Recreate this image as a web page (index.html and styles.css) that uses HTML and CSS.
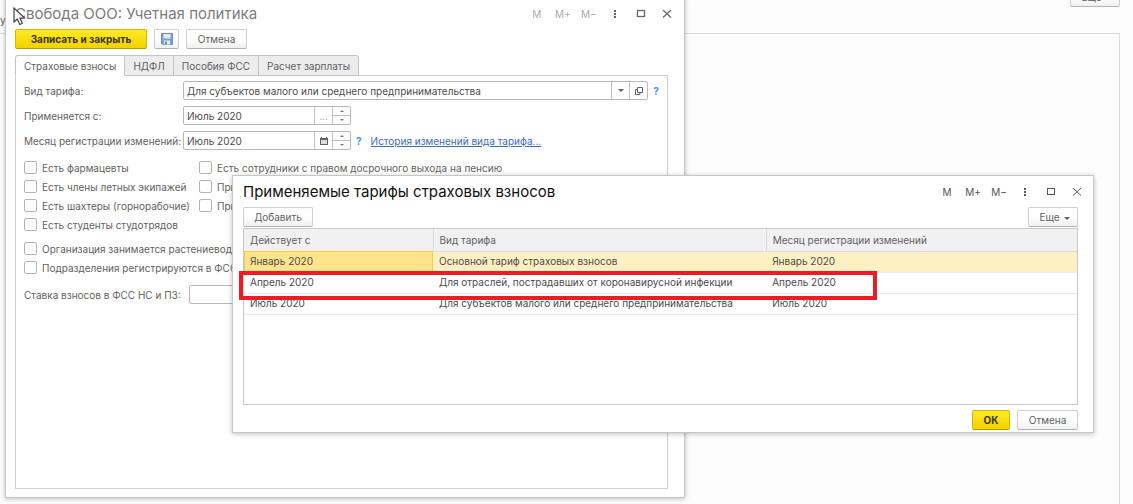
FILE: index.html
```html
<!DOCTYPE html>
<html lang="ru">
<head>
<meta charset="utf-8">
<title>Учетная политика</title>
<link rel="stylesheet" href="styles.css">
</head>
<body>
<div class="desktop">
  <div class="backdrop">
    <span class="backdrop-text">у</span>
    <button class="btn more backdrop-more" type="button">Еще <i class="caret"></i></button>
    <div class="backdrop-panel"></div>
  </div>

  <section class="window policy">
    <header class="titlebar">
      <h1 class="title">Свобода ООО: Учетная политика</h1>
      <div class="tools">
        <button type="button">M</button><button type="button">M+</button><button type="button">M−</button>
        <button type="button" aria-label="Меню"><svg width="12" height="12" viewBox="0 0 12 12"><path d="M5 2h2v2H5zM5 5h2v2H5zM5 8h2v2H5z" fill="currentColor"/></svg></button>
        <button type="button" aria-label="Развернуть"><svg width="12" height="12" viewBox="0 0 12 12"><rect x="2.500" y="2.500" width="7" height="6" fill="none" stroke="currentColor" stroke-width="1.300"/></svg></button>
        <button type="button" aria-label="Закрыть"><svg width="12" height="12" viewBox="0 0 12 12"><path d="M2 2l8 7.500M10 2L2 9.500" fill="none" stroke="currentColor" stroke-width="1.200"/></svg></button>
      </div>
    </header>
    <div class="commands">
      <button class="btn primary save" type="button">Записать и закрыть</button>
      <button class="btn disk" type="button" aria-label="Записать"><svg width="12" height="12" viewBox="0 0 12 12"><path d="M.5.500h11v11H1.500l-1-1z" fill="#7fa3cc" stroke="#6a8fb8"/><rect x="2.500" y="1" width="7" height="4.500" fill="#e0ebf6"/><rect x="3" y="7.500" width="6" height="4" fill="#e4ecf4"/><rect x="4" y="8.500" width="2" height="3" fill="#6a8fb8"/></svg></button>
      <button class="btn cancel" type="button">Отмена</button>
    </div>
    <nav class="tabs">
      <button class="tab active" type="button">Страховые взносы</button>
      <button class="tab" type="button">НДФЛ</button>
      <button class="tab" type="button">Пособия ФСС</button>
      <button class="tab" type="button">Расчет зарплаты</button>
    </nav>
    <form class="panel">
      <div class="fields">
        <label for="kind">Вид тарифа:</label>
        <div class="line">
          <div class="field wide">
            <input id="kind" type="text" value="Для субъектов малого или среднего предпринимательства">
            <button type="button" aria-label="Выбрать"><i class="caret"></i></button>
            <button type="button" aria-label="Открыть"><svg width="10" height="10" viewBox="0 0 10 10" fill="none" stroke="currentColor"><path d="M3.500 6.500v-5h5v5z"/><path d="M3.500 3.500h-2v5h4.500v-2"/></svg></button>
          </div>
          <a class="help" href="#">?</a>
        </div>
        <label for="from">Применяется с:</label>
        <div class="line">
          <div class="field">
            <input id="from" type="text" value="Июль 2020">
            <button type="button" class="dots">...</button>
            <div class="spin"><button type="button" aria-label="Больше"><i class="up"></i></button><button type="button" aria-label="Меньше"><i class="down"></i></button></div>
          </div>
        </div>
        <label for="month">Месяц регистрации изменений:</label>
        <div class="line">
          <div class="field">
            <input id="month" type="text" value="Июль 2020">
            <button type="button" aria-label="Календарь"><svg width="8" height="8" viewBox="0 0 8 8"><rect x=".5" y="1.500" width="7" height="6" fill="#ddd" stroke="currentColor"/><path d="M0 1h8v2H0zM1 0h1v1H1zM6 0h1v1H6z" fill="currentColor"/></svg></button>
            <div class="spin"><button type="button" aria-label="Больше"><i class="up"></i></button><button type="button" aria-label="Меньше"><i class="down"></i></button></div>
          </div>
          <a class="help" href="#">?</a>
          <a class="history" href="#">История изменений вида тарифа...</a>
        </div>
      </div>
      <div class="checks">
        <label><input type="checkbox">Есть фармацевты</label>
        <label><input type="checkbox">Есть сотрудники с правом досрочного выхода на пенсию</label>
        <label><input type="checkbox">Есть члены летных экипажей</label>
        <label><input type="checkbox">При</label>
        <label><input type="checkbox">Есть шахтеры (горнорабочие)</label>
        <label><input type="checkbox">При</label>
        <label><input type="checkbox">Есть студенты студотрядов</label>
      </div>
      <div class="checks single">
        <label><input type="checkbox">Организация занимается растениевод</label>
        <label><input type="checkbox">Подразделения регистрируются в ФСС</label>
      </div>
      <div class="line rate">
        <label for="rate">Ставка взносов в ФСС НС и ПЗ:</label>
        <div class="field"><input id="rate" type="text"></div>
      </div>
    </form>
  </section>

  <section class="window tariffs">
    <header class="titlebar">
      <h2 class="title">Применяемые тарифы страховых взносов</h2>
      <div class="tools">
        <button type="button">M</button><button type="button">M+</button><button type="button">M−</button>
        <button type="button" aria-label="Меню"><svg width="12" height="12" viewBox="0 0 12 12"><path d="M5 2h2v2H5zM5 5h2v2H5zM5 8h2v2H5z" fill="currentColor"/></svg></button>
        <button type="button" aria-label="Развернуть"><svg width="12" height="12" viewBox="0 0 12 12"><rect x="2.500" y="2.500" width="7" height="6" fill="none" stroke="currentColor"/></svg></button>
        <button type="button" aria-label="Закрыть"><svg width="12" height="12" viewBox="0 0 12 12"><path d="M2 2l8 7.500M10 2L2 9.500" fill="none" stroke="currentColor"/></svg></button>
      </div>
    </header>
    <div class="commands between">
      <button class="btn add" type="button">Добавить</button>
      <button class="btn more" type="button">Еще <i class="caret"></i></button>
    </div>
    <div class="grid">
      <table>
        <colgroup><col class="c1"><col class="c2"><col></colgroup>
        <thead><tr><th>Действует с</th><th>Вид тарифа</th><th>Месяц регистрации изменений</th></tr></thead>
        <tbody>
          <tr class="selected"><td>Январь 2020</td><td>Основной тариф страховых взносов</td><td>Январь 2020</td></tr>
          <tr><td>Апрель 2020</td><td>Для отраслей, пострадавших от коронавирусной инфекции</td><td>Апрель 2020</td></tr>
          <tr><td>Июль 2020</td><td>Для субъектов малого или среднего предпринимательства</td><td>Июль 2020</td></tr>
        </tbody>
      </table>
      <div class="highlight"></div>
    </div>
    <footer class="footer">
      <button class="btn primary ok" type="button">ОК</button>
      <button class="btn cancel" type="button">Отмена</button>
    </footer>
  </section>

  <svg class="cursor" width="13" height="19" viewBox="0 0 13 19"><path d="M1 1v14l3.300-3 2.500 5.500 2.500-1.200L7 11h4.500z" fill="#fff" stroke="#444" stroke-width="1.200"/></svg>
</div>
</body>
</html>
```

FILE: styles.css
```css
* { box-sizing: border-box; }
body {
  margin: 0;
  background: #fdfdfd;
  color: #626262;
  font: 10px/12px Inter, "Liberation Sans", Arial, sans-serif;
}
button, input { font: inherit; color: inherit; }
button { padding: 0; border: 0; background: none; }
.desktop { position: relative; min-height: 100vh; overflow: hidden; }

.backdrop { display: flex; flex-direction: column; min-height: 100vh; padding-right: 13px; }
.backdrop-text { position: absolute; left: 0; top: 14px; }
.backdrop-more { align-self: flex-end; margin-top: -13px; }
.backdrop-panel { flex: 1; margin-top: 26px; border: 1px solid #dcdcdc; border-width: 1px 1px 0 0; }

.window {
  position: absolute;
  padding: 0 15px 0 10px;
  background: #fff;
  border: 1px solid #c6c6c6;
  box-shadow: 0 1px 5px rgba(0, 0, 0, 0.25);
}
.policy { left: 5px; top: -3px; width: 60%; padding: 0 16px 8px 9px; }
.tariffs { left: 232px; right: 39px; top: 175px; padding-bottom: 2px; }

.titlebar { display: flex; justify-content: space-between; align-items: center; height: 31px; margin-right: -12px; }
.title { margin: 0; font-size: 15px; line-height: 18px; font-weight: normal; color: #111; }
.policy .title { color: #7c7c7c; }
.tools { display: flex; color: #555; }
.tools button { display: flex; justify-content: center; align-items: center; width: 26px; height: 16px; }
.policy .tools { color: #666; }
.policy .tools button:nth-child(-n+3) { color: #aaa; }

.commands { display: flex; gap: 7px; }
.between { justify-content: space-between; }
.btn {
  height: 20px;
  padding: 0;
  border: 1px solid #cfcfcf;
  border-bottom-color: #b4b4b4;
  border-radius: 2px;
  background: linear-gradient(#fff 50%, #f0f0f0);
  white-space: nowrap;
}
.primary { border-color: #d3b800 #d3b800 #b89f00; background: linear-gradient(#ffe925, #f3d200); color: #3c3500; font-weight: bold; }
.save { width: 132px; }
.disk { display: flex; justify-content: center; align-items: center; width: 25px; }
.cancel { width: 61px; }
.add { width: 70px; }
.ok { width: 38px; }
.more { width: 50px; padding-left: 4px; }
.caret { display: inline-block; margin-left: 2px; border: 3px solid transparent; border-top-color: currentColor; border-bottom: 0; vertical-align: 1px; }

.tabs { display: flex; margin-top: 6px; margin-bottom: -1px; }
.tab { height: 21px; padding: 0 8px; border: 1px solid #c4c4c4; border-left-width: 0; background: #ececec; }
.tab:last-child { border-top-right-radius: 3px; }
.tab.active { border-left-width: 1px; border-bottom-color: #fff; border-top-left-radius: 3px; background: #fff; z-index: 1; }
.panel { min-height: 414px; padding: 5px 20px 6px 8px; border: 1px solid #d0d0d0; }
.fields { display: grid; grid-template-columns: 159px 1fr; row-gap: 6px; align-items: center; }
.fields label { white-space: nowrap; }
.line { display: flex; align-items: center; }
.field { display: flex; flex: none; width: 168px; height: 19px; border: 1px solid #b8b8b8; border-radius: 2px; background: #fff; }
.wide { flex: 1; }
.field input { flex: 1; min-width: 0; padding: 0 3px; border: 0; outline: 0; background: none; color: #4c4c4c; }
.field > button { display: flex; justify-content: center; align-items: center; width: 18px; border-left: 1px solid #c0c0c0; }
.field .caret { margin: 0; }
.field .dots { color: #999; }
.spin { display: flex; flex-direction: column; width: 18px; border-left: 1px solid #c0c0c0; }
.spin button { display: flex; flex: 1; justify-content: center; align-items: center; }
.spin button + button { border-top: 1px solid #c0c0c0; }
.up, .down { border: 2px solid transparent; }
.up { border-top: 0; border-bottom-color: #777; }
.down { border-bottom: 0; border-top-color: #777; }
.help { padding-left: 5px; color: #3c9bd6; font-weight: bold; text-decoration: none; }
.wide + .help { margin-right: -12px; }
.history { margin-left: 9px; color: #3c6cc0; }

.checks { display: grid; grid-template-columns: 175px 1fr; row-gap: 6px; margin-top: 11px; }
.checks label { display: flex; align-items: center; gap: 5px; height: 13px; white-space: nowrap; }
.checks input { appearance: none; width: 13px; height: 13px; margin: 0; border: 1px solid #b4b4b4; border-radius: 2px; background: #fff; }
.single { grid-template-columns: 1fr; }
.rate { gap: 8px; margin-top: 11px; }

.grid { position: relative; min-height: 177px; margin-top: 1px; border: 1px solid #c8c8c8; }
table { width: 100%; border-collapse: collapse; table-layout: fixed; }
.c1 { width: 189px; }
.c2 { width: 40%; }
th, td { height: 21px; padding: 0 6px; border-bottom: 1px solid #ececec; text-align: left; font-weight: normal; }
th { height: 22px; background: #f1f1f1; border-right: 1px solid #dcdcdc; border-bottom-color: #dcdcdc; }
th:last-child { border-right: 0; }
td { padding-bottom: 1px; color: #4c4c4c; }
.selected td { background: #fdf1c4; }
.selected td:first-child { background: #ffe48c; outline: 1px solid #f5ce3e; outline-offset: -1px; }
.highlight { position: absolute; top: 42px; left: -5px; right: 24%; height: 29px; border: 4px solid #ed1c24; }
.footer { display: flex; justify-content: flex-end; gap: 7px; margin-top: 5px; }
.cursor { position: absolute; left: 13px; top: 7px; }
```
